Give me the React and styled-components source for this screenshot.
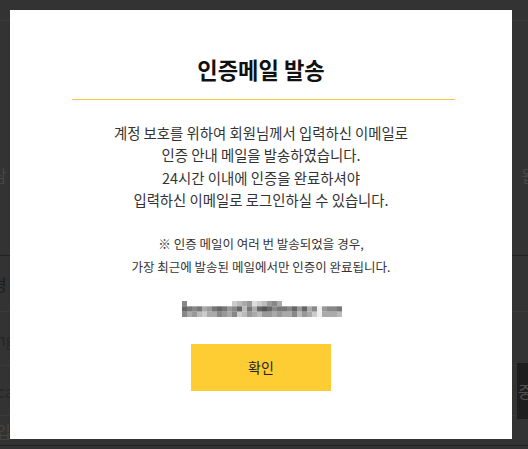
import React from "react";
import styled, { createGlobalStyle } from "styled-components";

const Global = createGlobalStyle`
  html, body { margin: 0; padding: 0; background: #333333; }
  body { font-family: "Noto Sans CJK KR", "Noto Sans", sans-serif; }
  * { box-sizing: border-box; }
`;

const Page = styled.div`
  width: 528px;
  height: 449px;
  overflow: hidden;
  background: #333333;
  display: flex;
  flex-direction: column;
  font-size: 16px;
`;

const TopBar = styled.div`
  height: 21px;
  flex: none;
  border-bottom: 1px solid #3b3b3b;
`;

const Section = styled.div`
  height: ${(p) => p.$h}px;
  flex: none;
  display: flex;
  align-items: ${(p) => p.$align || "center"};
  padding-top: ${(p) => p.$pt || 0}px;
  justify-content: space-between;
  border-bottom: 1px solid ${(p) => p.$line || "#3a3a3a"};
  overflow: visible;
`;

const EdgeText = styled.span`
  color: ${(p) => p.$c};
  font-size: 16px;
  line-height: 20px;
  white-space: nowrap;
  margin-left: ${(p) => p.$ml || 0}px;
  margin-right: ${(p) => p.$mr || 0}px;
`;

const DarkTab = styled.div`
  width: 11px;
  height: 56px;
  margin-top: -4px;
  margin-bottom: -4px;
  background: #1e1e1e;
  display: flex;
  align-items: center;
  overflow: hidden;
  flex: none;
`;

const TabText = styled.span`
  color: #505050;
  font-size: 16px;
  white-space: nowrap;
  margin-left: 1px;
`;

const Overlay = styled.div`
  position: fixed;
  inset: 0;
  padding: 10px;
  display: flex;
  align-items: flex-start;
`;

const Modal = styled.div`
  width: 502px;
  height: 429px;
  background: #ffffff;
  display: flex;
  flex-direction: column;
  align-items: center;
  padding-top: 46px;
`;

const Title = styled.h2`
  margin: 0;
  font-size: 22.2px;
  line-height: 26px;
  font-weight: 700;
  color: #111111;
`;

const Divider = styled.div`
  align-self: stretch;
  height: 1px;
  background: #f7c742;
  margin: 17px 57px 0 62px;
`;

const Body = styled.p`
  margin: 22px 0 0;
  font-size: 14.4px;
  line-height: 22.3px;
  color: #333333;
  text-align: center;
`;

const Note = styled.p`
  margin: 22px 0 0;
  font-size: 12.5px;
  line-height: 22.7px;
  color: #333333;
  text-align: center;
`;

const Mosaic = styled.svg`
  display: block;
  margin-top: 22px;
  margin-left: 1px;
`;

const Confirm = styled.button`
  margin-top: 27px;
  width: 140px;
  height: 47px;
  border: none;
  background: #fecc33;
  color: #222222;
  font-family: inherit;
  font-size: 14px;
  cursor: pointer;
`;

const rows = [
  "8fffffffffcba9dcb98affffffffffff",
  "6787a9767986b7a6568778696a8e9887",
  "8a9bcaa89a8cb9ab99a9aa8b9aceaaab",
];

function EmailMosaic() {
  const cells = [];
  rows.forEach((r, y) => {
    r.split("").forEach((ch, x) => {
      if (ch === "f") return;
      cells.push(
        <rect
          key={`${x}-${y}`}
          x={x * 5}
          y={y * 5.33}
          width={5}
          height={5.4}
          fill={`#${ch}${ch}${ch}`}
        />
      );
    });
  });
  return (
    <Mosaic width="160" height="16" viewBox="0 0 160 16" aria-label="email (blurred)">
      {cells}
    </Mosaic>
  );
}

export default function App() {
  return (
    <>
      <Global />
      <Page>
        <TopBar />
        <Section $h={235} $line="#222222" $align="flex-start" $pt={144}>
          <EdgeText $c="#474747" $ml={-8}>삼</EdgeText>
          <EdgeText $c="#474747" $mr={-8}>됩</EdgeText>
        </Section>
        <Section $h={56}>
          <EdgeText $c="#1c1c1c" $ml={-8}>경</EdgeText>
        </Section>
        <Section $h={54}>
          <EdgeText $c="#262626" $ml={-4}>ng</EdgeText>
        </Section>
        <Section $h={50}>
          <EdgeText $c="#262626" $ml={-3}>car</EdgeText>
          <DarkTab>
            <TabText>중</TabText>
          </DarkTab>
        </Section>
        <Section $h={30} $line="#222222">
          <EdgeText $c="#444444" $ml={-4}>입력</EdgeText>
        </Section>
      </Page>
      <Overlay>
        <Modal>
          <Title>인증메일 발송</Title>
          <Divider />
          <Body>
            계정 보호를 위하여 회원님께서 입력하신 이메일로
            <br />
            인증 안내 메일을 발송하였습니다.
            <br />
            24시간 이내에 인증을 완료하셔야
            <br />
            입력하신 이메일로 로그인하실 수 있습니다.
          </Body>
          <Note>
            ※ 인증 메일이 여러 번 발송되었을 경우,
            <br />
            가장 최근에 발송된 메일에서만 인증이 완료됩니다.
          </Note>
          <EmailMosaic />
          <Confirm>확인</Confirm>
        </Modal>
      </Overlay>
    </>
  );
}
